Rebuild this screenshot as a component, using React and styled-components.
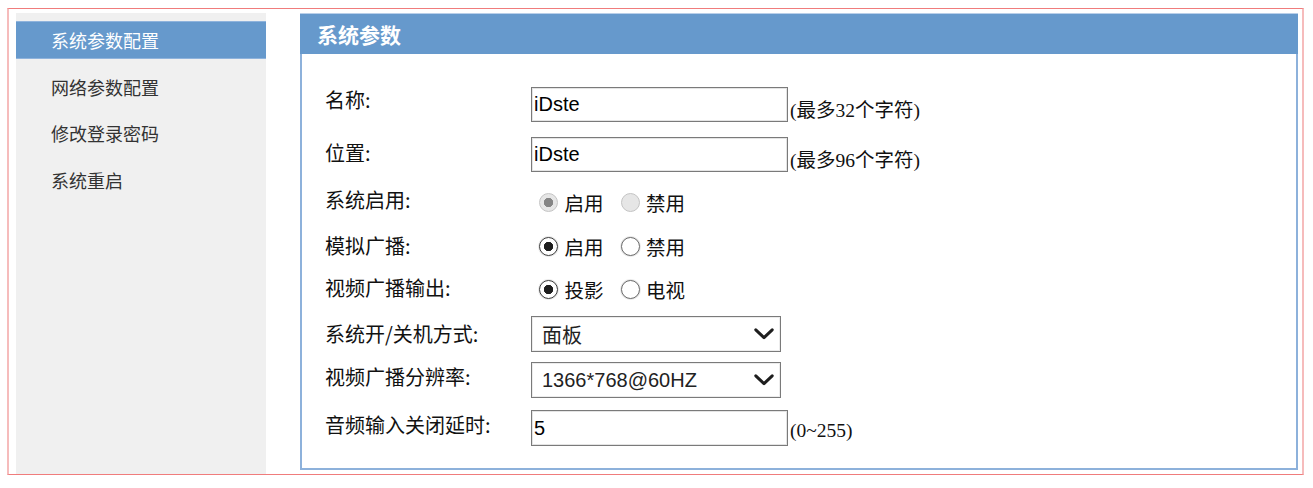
import React from 'react';
import styled, { createGlobalStyle } from 'styled-components';

const GlobalStyle = createGlobalStyle`
  html, body { margin: 0; padding: 0; background: #fff; }
  body { font-family: "Noto Sans CJK SC", "Noto Sans", sans-serif; color: #1a1a1a; }
`;

const Frame = styled.div`
  box-sizing: border-box;
  margin: 8px 0 0 7px;
  width: 1297px;
  height: 467px;
  border-top: 1px solid #f07c7c;
  border-bottom: 1px solid #f07c7c;
  border-left: 2px solid #f6bcbc;
  border-right: 2px solid #f6bcbc;
  padding: 4px 4px 0 7px;
  display: flex;
  gap: 34px;
`;

const Sidebar = styled.nav`
  width: 250px;
  flex: none;
  background: #f0f0f0;
  padding-top: 8px;
  display: flex;
  flex-direction: column;
  gap: 8.6px;
`;

const NavItem = styled.div`
  height: 38px;
  line-height: 38px;
  padding-left: 35px;
  font-size: 18px;
  color: ${p => (p.$active ? '#fff' : '#333')};
  background: ${p => (p.$active ? '#6699cc' : 'transparent')};
  box-shadow: ${p => (p.$active ? 'inset 0 1px #8fb3dc, inset 0 -1px #8fb3dc' : 'none')};
`;

const Panel = styled.section`
  box-sizing: border-box;
  width: 998px;
  margin-bottom: 4px;
  border: 2px solid #8db1db;
  border-top: 0;
  display: flex;
  flex-direction: column;
`;

const PanelHeader = styled.h2`
  margin: 0 -2px;
  height: 41px;
  box-sizing: border-box;
  border-top: 1px solid #b9cfe9;
  background: #6699cc;
  color: #fff;
  font-size: 21px;
  font-weight: bold;
  line-height: 40px;
  padding-left: 17px;
`;

const Form = styled.div`
  padding: 25.5px 0 0 23px;
  display: flex;
  flex-direction: column;
`;

const Row = styled.div`
  height: ${p => p.$h}px;
  display: grid;
  grid-template-columns: 206px 1fr;
  align-items: center;
`;

const Label = styled.div`
  font-size: 20px;
  line-height: 24px;
  color: #111;
  padding-bottom: ${p => p.$lift * 2}px;
`;

const Control = styled.div`
  display: flex;
  align-items: flex-end;
`;

const TextField = styled.input`
  box-sizing: border-box;
  width: 257px;
  height: ${p => p.$h}px;
  margin: 0;
  padding: 0 2px;
  border: 1px solid #7a7a7a;
  box-shadow: inset 0 0 0 1px #e4e4e4;
  font-family: "Liberation Sans", "Noto Sans CJK SC", sans-serif;
  font-size: 20px;
  color: #000;
  background: #fff;
  outline: none;
`;

const Hint = styled.span`
  margin-left: 2px;
  font-family: "Liberation Serif", "Noto Sans CJK SC", serif;
  font-size: 19.5px;
  line-height: 22px;
  color: #111;
  padding-bottom: ${p => p.$drop}px;
`;

const RadioGroup = styled.div`
  display: flex;
  align-items: center;
  padding-left: 8px;
`;

const RadioOption = styled.label`
  display: inline-flex;
  align-items: center;
  gap: 6.5px;
  font-size: 19.5px;
  line-height: 24px;
  color: #111;
  & + & { margin-left: 17px; }
`;

const Radio = styled.input.attrs({ type: 'radio' })`
  appearance: none;
  -webkit-appearance: none;
  box-sizing: border-box;
  width: 19px;
  height: 19px;
  margin: 0;
  border-radius: 50%;
  border: 1.5px solid #6a6a6a;
  background: #fff;
  box-shadow: 0 0 0 1px #e8e8e8;
  &:checked {
    border-color: #3a3a3a;
    background: radial-gradient(circle, #1e1e1e 0 4.4px, #fff 5px);
  }
  &:disabled {
    border-color: #c4c4c4;
    background: #e6e6e6;
    box-shadow: none;
  }
  &:disabled:checked {
    background: radial-gradient(circle, #858585 0 4.4px, #e6e6e6 5px);
  }
`;

const SelectBox = styled.div`
  box-sizing: border-box;
  width: 250px;
  height: 36px;
  border: 1px solid #7a7a7a;
  box-shadow: inset 0 0 0 1px #ececec;
  padding: 0 6px 0 10px;
  display: flex;
  align-items: center;
  justify-content: space-between;
  font-family: "Liberation Sans", "Noto Sans CJK SC", sans-serif;
  font-size: 20px;
  color: #222;
  background: #fff;
`;

const Chevron = () => (
  <svg width="20" height="12" viewBox="0 0 20 12" aria-hidden="true">
    <path d="M1.8 1.8 L10 9.6 L18.2 1.8" fill="none" stroke="#1e1e1e" strokeWidth="3" strokeLinecap="round" strokeLinejoin="round" />
  </svg>
);

const navItems = ['系统参数配置', '网络参数配置', '修改登录密码', '系统重启'];

const Select = ({ value }) => (
  <SelectBox>
    <span>{value}</span>
    <Chevron />
  </SelectBox>
);

const RadioPair = ({ name, options, checked, disabled }) => (
  <RadioGroup>
    {options.map((o, i) => (
      <RadioOption key={o}>
        <Radio name={name} defaultChecked={i === checked} disabled={disabled} />
        {o}
      </RadioOption>
    ))}
  </RadioGroup>
);

export default function App() {
  return (
    <>
      <GlobalStyle />
      <Frame>
        <Sidebar>
          {navItems.map((t, i) => (
            <NavItem key={t} $active={i === 0}>{t}</NavItem>
          ))}
        </Sidebar>
        <Panel>
          <PanelHeader>系统参数</PanelHeader>
          <Form>
            <Row $h={50}>
              <Label $lift={4.5}>名称:</Label>
              <Control>
                <TextField $h={35} defaultValue="iDste" />
                <Hint $drop={0}>(最多32个字符)</Hint>
              </Control>
            </Row>
            <Row $h={50.25}>
              <Label $lift={1.5}>位置:</Label>
              <Control>
                <TextField $h={35} defaultValue="iDste" />
                <Hint $drop={0}>(最多96个字符)</Hint>
              </Control>
            </Row>
            <Row $h={45.75}>
              <Label $lift={3}>系统启用:</Label>
              <RadioPair name="sys" options={['启用', '禁用']} checked={0} disabled />
            </Row>
            <Row $h={42.5}>
              <Label $lift={1}>模拟广播:</Label>
              <RadioPair name="analog" options={['启用', '禁用']} checked={0} />
            </Row>
            <Row $h={43.5}>
              <Label $lift={2}>视频广播输出:</Label>
              <RadioPair name="video" options={['投影', '电视']} checked={0} />
            </Row>
            <Row $h={45}>
              <Label $lift={0}>系统开/关机方式:</Label>
              <Control><Select value="面板" /></Control>
            </Row>
            <Row $h={47.5}>
              <Label $lift={3}>视频广播分辨率:</Label>
              <Control><Select value="1366*768@60HZ" /></Control>
            </Row>
            <Row $h={48}>
              <Label $lift={3}>音频输入关闭延时:</Label>
              <Control>
                <TextField $h={36} defaultValue="5" />
                <Hint $drop={4}>(0~255)</Hint>
              </Control>
            </Row>
          </Form>
        </Panel>
      </Frame>
    </>
  );
}
